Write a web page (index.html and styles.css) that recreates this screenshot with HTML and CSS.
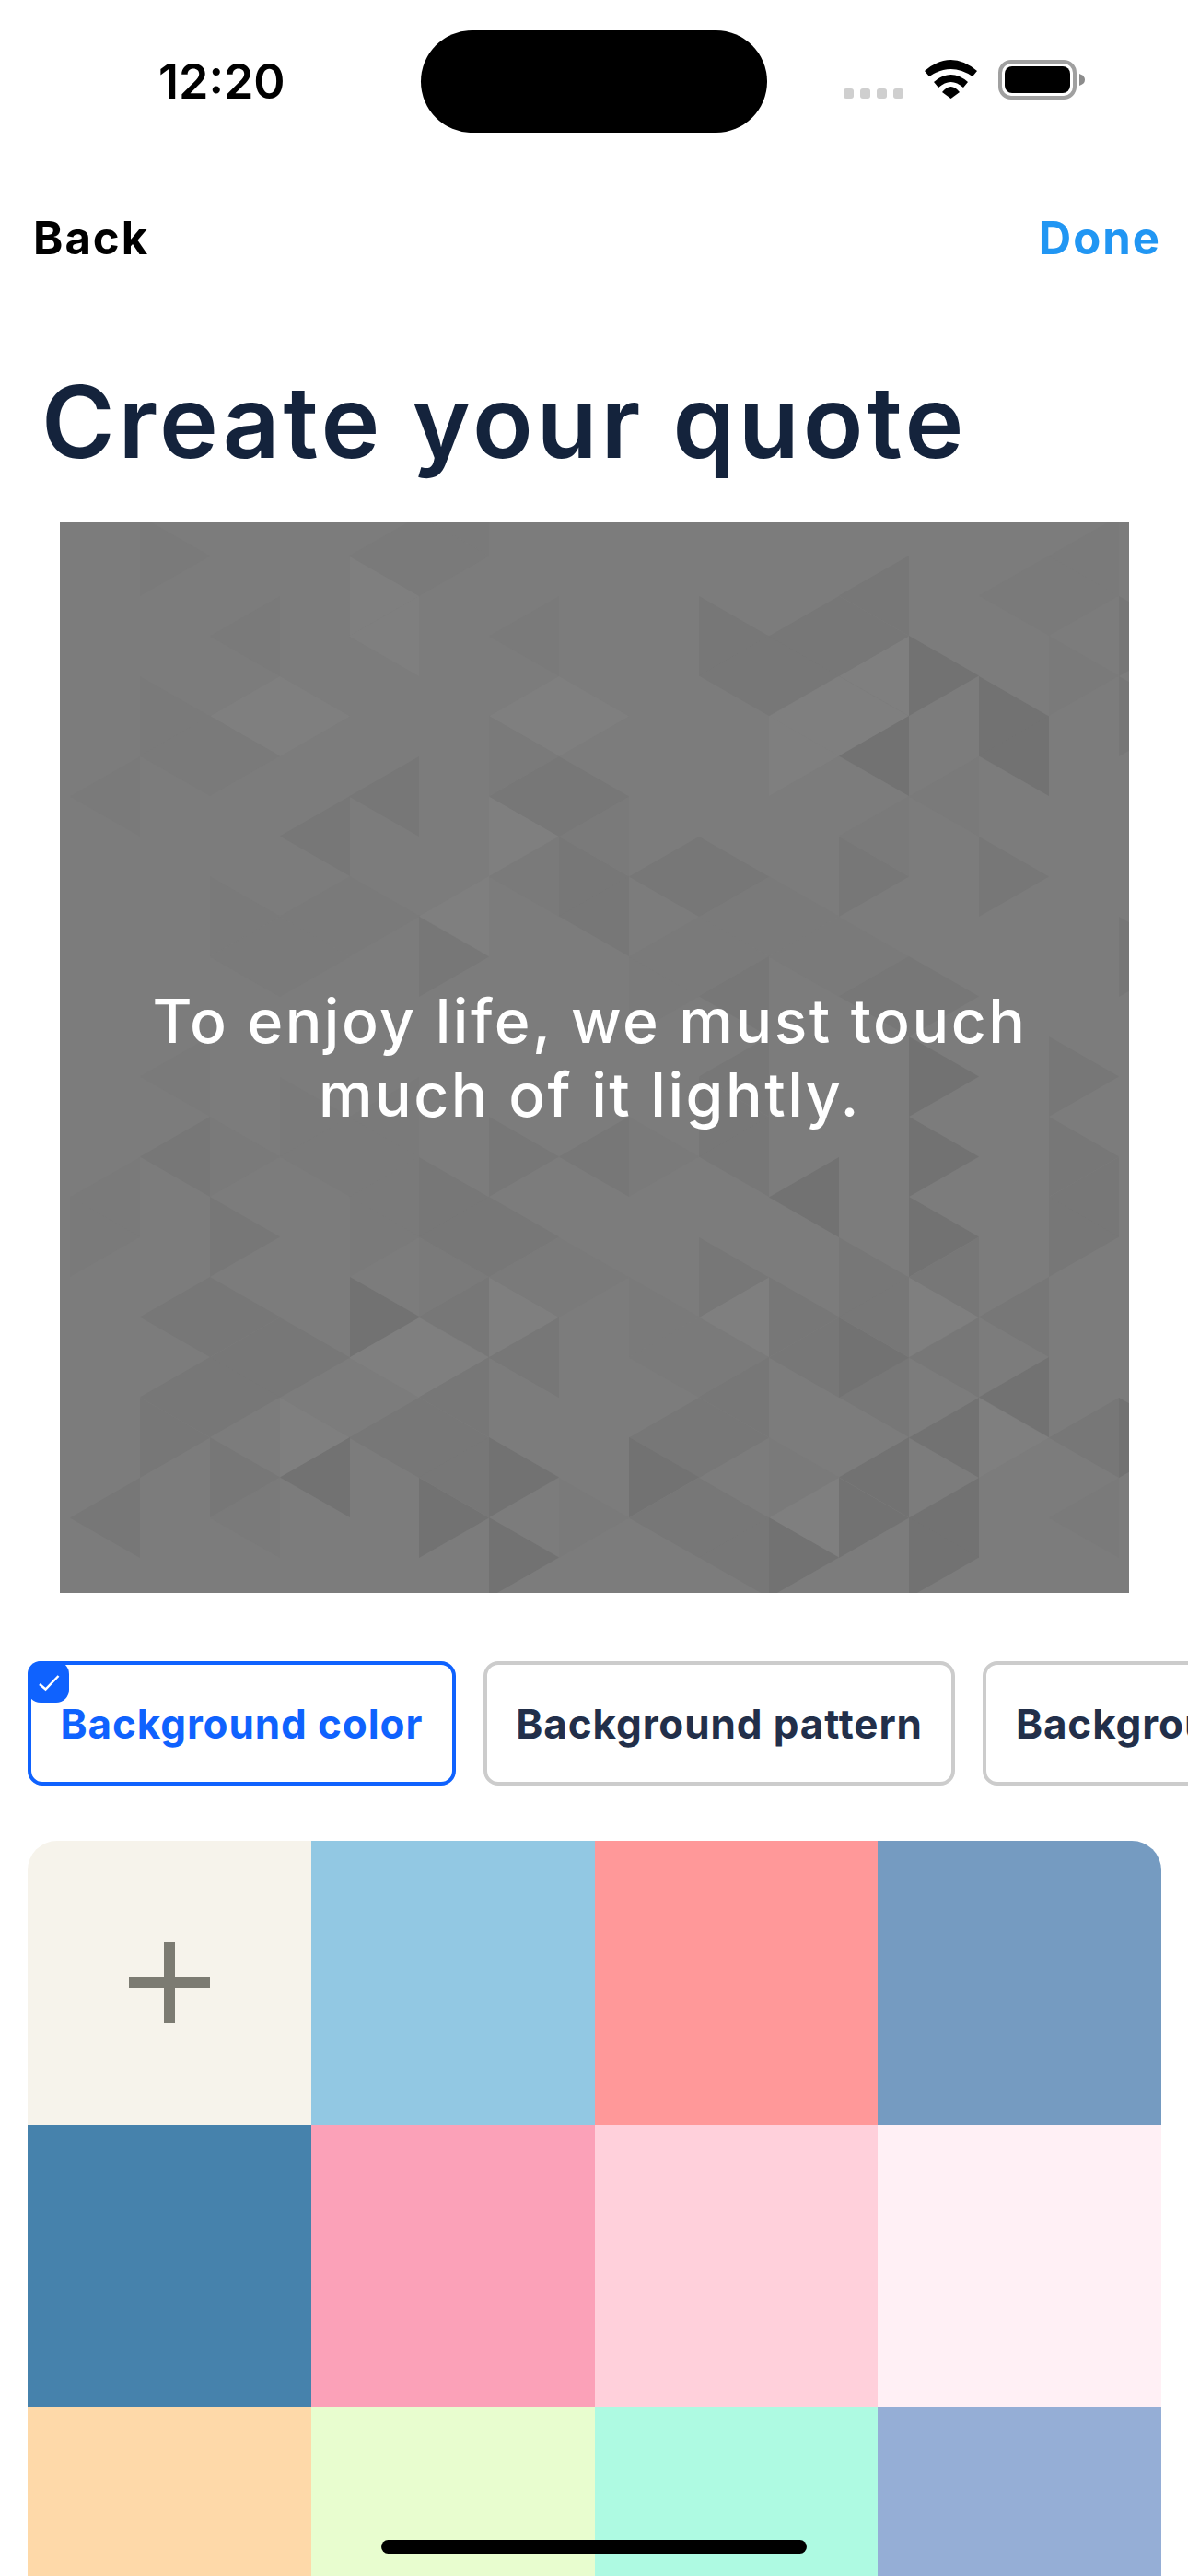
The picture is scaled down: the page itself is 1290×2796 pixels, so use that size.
FILE: index.html
```html
<!DOCTYPE html>
<html lang="en">
<head>
<meta charset="utf-8">
<title>Create your quote</title>
<link rel="stylesheet" href="styles.css">
</head>
<body>
<div class="screen">
  <header class="status">
    <span class="time">12:20</span>
    <span class="island"></span>
    <svg class="status-icons" viewBox="0 0 262 45" width="262" height="45">
      <g class="dots">
        <rect x="0" y="32" width="11" height="11" rx="3"/>
        <rect x="18" y="32" width="11" height="11" rx="3"/>
        <rect x="36" y="32" width="11" height="11" rx="3"/>
        <rect x="54" y="32" width="11" height="11" rx="3"/>
      </g>
      <path d="M88 13Q116.5 -11 145 13L140 19Q116.5 3 93 19Z"/>
      <path d="M98 25Q116.5 9 135 25L130 31Q116.5 19 103 31Z"/>
      <path d="M107 36Q116.5 24 126 36L116.5 43Z"/>
      <rect class="batt-frame" x="170" y="3" width="81" height="39" rx="12"/>
      <rect x="175" y="8" width="71" height="29" rx="8"/>
      <path class="batt-nub" d="M256 16Q262 18 262 22.5Q262 27 256 29Z"/>
    </svg>
  </header>

  <nav class="nav">
    <span class="back">Back</span>
    <span class="done">Done</span>
  </nav>

  <h1 class="title">Create your quote</h1>

  <section class="preview">
    <svg class="pattern" viewBox="0 0 1161 1162" aria-hidden="true">
      <defs>
        <polygon id="r" points="0,0 0,87 76,43.5"/>
        <polygon id="l" points="0,0 0,87 -76,43.5"/>
      </defs>
      <g class="s0">
        <use href="#l" x="846" y="167"/><use href="#r" x="846" y="167"/><use href="#l" x="922" y="123"/><use href="#r" x="770" y="210"/>
        <use href="#l" x="239" y="167"/><use href="#r" x="239" y="167"/><use href="#r" x="315" y="36"/><use href="#l" x="390" y="80"/>
        <use href="#l" x="390" y="863"/><use href="#r" x="390" y="863"/><use href="#r" x="466" y="819"/><use href="#r" x="239" y="950"/>
        <use href="#r" x="998" y="950"/><use href="#r" x="922" y="819"/><use href="#l" x="770" y="819"/><use href="#l" x="846" y="1037"/>
        <use href="#r" x="466" y="297"/><use href="#l" x="542" y="167"/><use href="#r" x="542" y="167"/><use href="#l" x="466" y="384"/>
      </g>
      <g class="s1">
        <use href="#l" x="87" y="254"/><use href="#r" x="87" y="167"/><use href="#l" x="163" y="210"/><use href="#r" x="163" y="210"/>
        <use href="#r" x="87" y="-7"/><use href="#r" x="163" y="384"/><use href="#l" x="239" y="428"/><use href="#r" x="239" y="428"/>
        <use href="#l" x="315" y="384"/><use href="#r" x="315" y="384"/><use href="#l" x="239" y="80"/><use href="#l" x="390" y="-7"/>
        <use href="#r" x="390" y="-7"/><use href="#l" x="466" y="-51"/><use href="#r" x="466" y="210"/><use href="#l" x="542" y="80"/>
        <use href="#l" x="542" y="341"/><use href="#l" x="618" y="297"/><use href="#l" x="922" y="297"/><use href="#l" x="998" y="254"/>
        <use href="#r" x="1074" y="123"/><use href="#l" x="1074" y="36"/><use href="#r" x="1074" y="36"/><use href="#l" x="1150" y="-7"/>
        <use href="#l" x="770" y="384"/><use href="#r" x="770" y="384"/><use href="#l" x="846" y="428"/><use href="#r" x="846" y="428"/>
        <use href="#r" x="618" y="471"/><use href="#l" x="694" y="428"/><use href="#r" x="694" y="428"/>
        <use href="#r" x="163" y="645"/><use href="#r" x="239" y="602"/><use href="#l" x="315" y="645"/><use href="#r" x="315" y="645"/><use href="#l" x="390" y="602"/>
        <use href="#l" x="87" y="689"/><use href="#r" x="11" y="732"/><use href="#l" x="239" y="1037"/><use href="#l" x="163" y="558"/>
        <use href="#l" x="390" y="689"/><use href="#r" x="315" y="732"/><use href="#l" x="542" y="776"/><use href="#r" x="390" y="776"/><use href="#r" x="542" y="776"/>
        <use href="#l" x="542" y="863"/><use href="#r" x="618" y="819"/><use href="#l" x="694" y="863"/><use href="#r" x="694" y="863"/>
        <use href="#r" x="770" y="993"/><use href="#r" x="542" y="1037"/><use href="#l" x="1150" y="1037"/><use href="#r" x="618" y="645"/>
      </g>
      <g class="s2">
        <use href="#r" x="390" y="428"/><use href="#l" x="390" y="254"/><use href="#l" x="315" y="297"/><use href="#l" x="542" y="254"/>
        <use href="#r" x="542" y="254"/><use href="#r" x="542" y="341"/><use href="#l" x="618" y="384"/><use href="#r" x="694" y="80"/>
        <use href="#l" x="770" y="123"/><use href="#r" x="770" y="123"/><use href="#l" x="846" y="80"/><use href="#r" x="846" y="80"/><use href="#l" x="922" y="36"/>
        <use href="#r" x="846" y="341"/><use href="#r" x="998" y="341"/><use href="#l" x="694" y="341"/><use href="#r" x="694" y="341"/>
        <use href="#r" x="1150" y="80"/><use href="#r" x="1150" y="167"/><use href="#r" x="1150" y="428"/><use href="#l" x="770" y="471"/>
        <use href="#r" x="922" y="471"/><use href="#l" x="922" y="471"/><use href="#l" x="163" y="645"/><use href="#r" x="163" y="732"/>
        <use href="#r" x="390" y="689"/><use href="#r" x="466" y="732"/><use href="#l" x="466" y="732"/><use href="#l" x="466" y="819"/>
        <use href="#r" x="466" y="645"/><use href="#l" x="618" y="645"/><use href="#l" x="163" y="819"/><use href="#r" x="163" y="819"/>
        <use href="#l" x="239" y="863"/><use href="#r" x="239" y="863"/><use href="#r" x="163" y="906"/><use href="#l" x="163" y="906"/>
        <use href="#r" x="87" y="950"/><use href="#l" x="390" y="950"/><use href="#r" x="390" y="950"/><use href="#l" x="466" y="993"/>
        <use href="#r" x="163" y="993"/><use href="#l" x="87" y="1037"/><use href="#l" x="466" y="906"/><use href="#l" x="542" y="863"/>
        <use href="#r" x="694" y="602"/><use href="#l" x="770" y="645"/><use href="#l" x="770" y="558"/><use href="#r" x="694" y="776"/>
        <use href="#l" x="998" y="776"/><use href="#r" x="846" y="776"/><use href="#l" x="922" y="819"/><use href="#r" x="770" y="819"/>
        <use href="#l" x="846" y="863"/><use href="#l" x="922" y="906"/><use href="#l" x="998" y="863"/><use href="#l" x="770" y="906"/>
        <use href="#l" x="694" y="950"/><use href="#r" x="694" y="950"/><use href="#r" x="694" y="1037"/><use href="#l" x="694" y="1037"/><use href="#l" x="770" y="1080"/>
        <use href="#l" x="1074" y="819"/><use href="#r" x="1074" y="645"/><use href="#l" x="1150" y="689"/><use href="#r" x="1074" y="732"/><use href="#r" x="1074" y="558"/>
        <use href="#l" x="1150" y="950"/>
      </g>
      <g class="s3">
        <use href="#r" x="922" y="123"/><use href="#r" x="998" y="167"/><use href="#l" x="1074" y="210"/><use href="#l" x="922" y="210"/>
        <use href="#r" x="315" y="819"/><use href="#l" x="315" y="993"/><use href="#r" x="466" y="993"/><use href="#r" x="390" y="1037"/><use href="#r" x="466" y="1080"/>
        <use href="#r" x="922" y="558"/><use href="#r" x="922" y="645"/><use href="#r" x="922" y="732"/><use href="#l" x="846" y="689"/>
        <use href="#r" x="846" y="863"/><use href="#r" x="618" y="993"/><use href="#r" x="770" y="1080"/><use href="#l" x="922" y="993"/>
        <use href="#r" x="846" y="1037"/><use href="#l" x="998" y="950"/><use href="#l" x="998" y="1037"/><use href="#r" x="922" y="1080"/><use href="#r" x="922" y="1167"/>
        <use href="#l" x="1074" y="906"/><use href="#r" x="1150" y="950"/>
      </g>
    </svg>
    <p class="quote">To enjoy life, we must touch<br>much of it lightly.</p>
  </section>

  <div class="chips">
    <div class="chip chip-active">
      <span class="badge">
        <svg viewBox="0 0 45 45" width="45" height="45"><path d="M13 25L19.500 30.500L33.500 16"/></svg>
      </span>
      Background color
    </div>
    <div class="chip">Background pattern</div>
    <div class="chip">Background image</div>
  </div>

  <div class="swatches">
    <div class="swatch c-add">
      <svg viewBox="0 0 88 88" width="88" height="88"><path d="M38 0H50V38H88V50H50V88H38V50H0V38H38Z"/></svg>
    </div>
    <div class="swatch c-sky"></div>
    <div class="swatch c-coral"></div>
    <div class="swatch c-steel"></div>
    <div class="swatch c-ocean"></div>
    <div class="swatch c-rose"></div>
    <div class="swatch c-blush"></div>
    <div class="swatch c-lav"></div>
    <div class="swatch c-peach"></div>
    <div class="swatch c-lime"></div>
    <div class="swatch c-mint"></div>
    <div class="swatch c-peri"></div>
  </div>

  <div class="home-indicator"></div>
</div>
</body>
</html>
```

FILE: styles.css
```css
* { box-sizing: border-box; }

html, body { margin: 0; padding: 0; background: #fff; }

.screen {
  position: relative;
  width: 1290px;
  height: 2796px;
  overflow: hidden;
  background: #fff;
  font-family: "Inter", "Liberation Sans", sans-serif;
}

.status {
  display: flex;
  align-items: center;
  height: 144px;
  padding: 33px 0 0 172px;
}

.time {
  width: 285px;
  font-size: 52px;
  font-weight: 600;
  color: #000;
}

.island {
  width: 376px;
  height: 111px;
  border-radius: 56px;
  background: #000;
}

.status-icons {
  margin-left: 83px;
  margin-top: -4px;
  fill: #000;
}
.dots { fill: #cfcfcf; }
.batt-frame { fill: none; stroke: #a0a0a0; stroke-width: 4; }
.batt-nub { fill: #8c8c8c; }

.nav {
  display: flex;
  justify-content: space-between;
  margin-top: 85px;
  padding: 0 29px 0 36px;
  font-size: 49px;
  line-height: 60px;
  font-weight: 700;
  letter-spacing: 2px;
}
.back { color: #000; }
.done { color: #2196f3; }

.title {
  margin: 103px 0 0 45px;
  font-size: 108px;
  line-height: 132px;
  font-weight: 600;
  letter-spacing: 3.9px;
  color: #14233c;
}

.preview {
  position: relative;
  display: flex;
  align-items: center;
  justify-content: center;
  width: 1161px;
  height: 1162px;
  margin: 43px 0 0 65px;
  background: #7c7c7c;
  overflow: hidden;
}
.pattern { position: absolute; inset: 0; width: 100%; height: 100%; }
.s0 { fill: #7f7f7f; }
.s1 { fill: #7a7a7a; }
.s2 { fill: #777777; }
.s3 { fill: #727272; }

.quote {
  position: relative;
  margin: 0 10px 0 0;
  text-align: center;
  color: #fff;
  font-size: 66px;
  line-height: 80px;
  font-weight: 500;
  letter-spacing: 2.5px;
}

.chips {
  display: flex;
  gap: 30px;
  margin: 74px 0 0 30px;
}
.chip {
  position: relative;
  flex: none;
  display: flex;
  align-items: center;
  height: 135px;
  padding: 0 31.500px;
  border: 4px solid #cccccc;
  border-radius: 16px;
  font-size: 44px;
  font-weight: 700;
  letter-spacing: 0.9px;
  color: #222f4a;
}
.chip-active { border-color: #0f62fe; color: #0f62fe; }

.badge {
  position: absolute;
  top: -4px;
  left: -4px;
  width: 45px;
  height: 45px;
  border-radius: 14px;
  background: #0f62fe;
}
.badge svg { display: block; fill: none; stroke: #fff; stroke-width: 2.5; }

.swatches {
  display: grid;
  grid-template-columns: repeat(4, 307.75px);
  grid-auto-rows: 307.5px;
  width: 1231px;
  margin: 60px 0 0 30px;
  border-radius: 32px 32px 0 0;
  overflow: hidden;
}
.swatch { display: flex; align-items: center; justify-content: center; }
.swatch svg { fill: #7c7b72; }

.c-add { background: #f6f3eb; }
.c-sky { background: #92c8e3; }
.c-coral { background: #ff9899; }
.c-steel { background: #759bc1; }
.c-ocean { background: #4682ac; }
.c-rose { background: #fba1b8; }
.c-blush { background: #ffd0db; }
.c-lav { background: #fff0f5; }
.c-peach { background: #fed9a9; }
.c-lime { background: #e8fdcf; }
.c-mint { background: #aefae2; }
.c-peri { background: #95aed6; }

.home-indicator {
  position: absolute;
  left: 414px;
  top: 2757px;
  width: 462px;
  height: 15px;
  border-radius: 8px;
  background: #000;
}
```
